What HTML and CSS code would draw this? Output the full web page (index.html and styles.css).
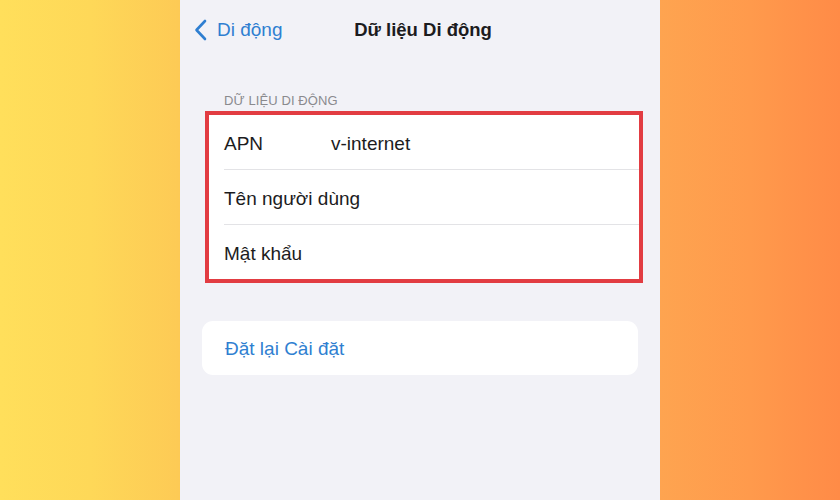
FILE: index.html
```html
<!DOCTYPE html>
<html lang="vi">
<head>
    <meta charset="UTF-8">
    <meta name="viewport" content="width=device-width, initial-scale=1.0">
    <title>Dữ liệu Di động</title>
    <link rel="stylesheet" href="styles.css">
</head>
<body>
    <div class="side side-left"></div>

    <main class="phone">
        <!-- Thanh điều hướng -->
        <nav class="nav-bar">
            <a href="#" class="back-link">
                <svg class="chevron" width="14" height="22" viewBox="0 0 14 22">
                    <path d="M11 2 L2.5 11 L11 20" fill="none" stroke="currentColor" stroke-width="2.6" stroke-linecap="round" stroke-linejoin="round"/>
                </svg>
                <span>Di động</span>
            </a>
            <h1 class="nav-title">Dữ liệu Di động</h1>
        </nav>

        <div class="section-header">DỮ LIỆU DI ĐỘNG</div>

        <div class="card card-highlight">
            <div class="row">
                <span class="row-label">APN</span>
                <span class="row-value">v-internet</span>
            </div>
            <div class="row">
                <span class="row-label">Tên người dùng</span>
            </div>
            <div class="row">
                <span class="row-label">Mật khẩu</span>
            </div>
        </div>

        <div class="card card-reset">
            <a href="#" class="reset-link">Đặt lại Cài đặt</a>
        </div>
    </main>

    <div class="side side-right"></div>
</body>
</html>
```

FILE: styles.css
```css
:root {
    --ios-bg: #f2f2f7;
    --ios-blue: #2f7fd1;
    --ios-gray: #8a8a8e;
    --line: #e3e3e6;
    --red: #e23c42;
}

* {
    box-sizing: border-box;
}

body {
    margin: 0;
    height: 500px;
    display: flex;
    font-family: 'Liberation Sans', Arial, sans-serif;
    color: #1c1c1e;
    overflow: hidden;
}

.side {
    width: 180px;
    flex-shrink: 0;
}

.side-left {
    background: linear-gradient(90deg, #ffdf5b 0%, #fed858 50%, #fdca55 100%);
}

.side-right {
    background: linear-gradient(90deg, #fea450 0%, #ff9a4c 50%, #ff8b47 100%);
}

.phone {
    width: 480px;
    flex-shrink: 0;
    background-color: var(--ios-bg);
    padding: 0 22px;
}

.nav-bar {
    position: relative;
    height: 60px;
    display: flex;
    align-items: center;
}

.back-link {
    display: flex;
    align-items: center;
    gap: 9px;
    color: var(--ios-blue);
    text-decoration: none;
    font-size: 19px;
    margin-left: -8px;
    margin-top: -1px;
}

.nav-title {
    position: absolute;
    left: 0;
    right: 0;
    text-align: center;
    margin: 0;
    font-size: 18.5px;
    font-weight: bold;
    pointer-events: none;
    margin-top: -1px;
    padding-left: 6px;
}

.section-header {
    color: var(--ios-gray);
    font-size: 13px;
    padding-left: 22px;
    margin-top: 33px;
    height: 18px;
    letter-spacing: 0.1px;
}

.card {
    background-color: #fff;
}

.card-highlight {
    border: 4px solid var(--red);
    margin: 0 -5px 0 3px;
    padding-left: 15px;
}

.row {
    display: flex;
    align-items: center;
    height: 55px;
    padding-top: 3px;
    font-size: 19px;
    border-bottom: 1px solid var(--line);
}

.row:last-child {
    border-bottom: none;
    height: 54px;
}

.row-label {
    min-width: 107px;
    white-space: nowrap;
}

.card-reset {
    margin-top: 38px;
    height: 54px;
    border-radius: 11px;
    display: flex;
    align-items: center;
    padding-left: 23px;
    padding-top: 2px;
}

.reset-link {
    color: var(--ios-blue);
    text-decoration: none;
    font-size: 19px;
}
```
